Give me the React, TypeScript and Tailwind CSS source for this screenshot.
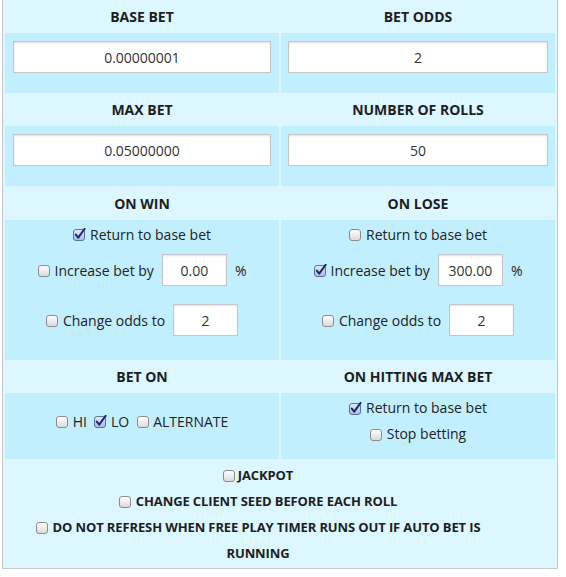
import React from 'react';

const Box = ({ checked = false, className = '' }: { checked?: boolean; className?: string }) => (
  <svg width="13" height="13" viewBox="0 0 13 13" className={`inline-block shrink-0 ${className}`}>
    <defs>
      <linearGradient id="cbOff" x1="0" y1="0" x2="0" y2="1">
        <stop offset="0" stopColor="#ffffff" />
        <stop offset="1" stopColor="#d9d9d9" />
      </linearGradient>
      <linearGradient id="cbOn" x1="0" y1="0" x2="0" y2="1">
        <stop offset="0" stopColor="#e4ebfa" />
        <stop offset="1" stopColor="#a9b9e3" />
      </linearGradient>
    </defs>
    <rect
      x="0.5"
      y="1.5"
      width="11"
      height="11"
      rx="2.5"
      fill={checked ? 'url(#cbOn)' : 'url(#cbOff)'}
      stroke={checked ? '#5f6f9c' : '#8c8c8c'}
    />
    {checked && (
      <path d="M2.8 6.6 L5.2 9.6 L11.6 0.8" stroke="#1c2a6b" strokeWidth="2" fill="none" strokeLinecap="round" strokeLinejoin="round" />
    )}
  </svg>
);

const Field = ({ value, className = '' }: { value: string; className?: string }) => (
  <div
    className={`h-[32px] bg-white border border-[#c6c6c6] shadow-[inset_0_1px_2px_rgba(0,0,0,0.12)] flex items-center justify-center text-[14px] text-[#333] ${className}`}
  >
    {value}
  </div>
);

const Head = ({ label, h = 'h-[33px]' }: { label: string; h?: string }) => (
  <div className={`${h} flex items-center justify-center font-bold text-[14px] text-[#1e1e1e]`}>{label}</div>
);

const Option = ({ checked = false, label }: { checked?: boolean; label: string }) => (
  <div className="flex items-center justify-center gap-[4px] h-[20px]">
    <Box checked={checked} />
    <span>{label}</span>
  </div>
);

const Adjust = ({ checked = false, label, value, pct = false }: { checked?: boolean; label: string; value: string; pct?: boolean }) => (
  <div className="flex items-center justify-center h-[32px]">
    <Box checked={checked} />
    <span className="ml-[4px]">{label}</span>
    <Field value={value} className="w-[65px] ml-[8px]" />
    {pct && <span className="ml-[8px]">%</span>}
  </div>
);

export default function App() {
  return (
    <div className="w-[566px] h-[577px] bg-white font-['Open_Sans',sans-serif] text-[14px] text-[#222]">
      <div className="ml-[2px] w-[556px] border-x border-b border-[#c9c9c9] bg-[#dcf7ff] px-[2px]">
        <div className="grid grid-cols-2 gap-x-[2px]">
          {/* Base bet / odds */}
          <Head label="BASE BET" />
          <Head label="BET ODDS" />
          <div className="h-[60px] bg-[#c2effe] pt-[8px] px-[8px]">
            <Field value="0.00000001" />
          </div>
          <div className="h-[60px] bg-[#c2effe] pt-[8px] px-[7px]">
            <Field value="2" />
          </div>

          {/* Max bet / rolls */}
          <Head label="MAX BET" />
          <Head label="NUMBER OF ROLLS" />
          <div className="h-[60px] bg-[#c2effe] pt-[8px] px-[8px]">
            <Field value="0.05000000" />
          </div>
          <div className="h-[60px] bg-[#c2effe] pt-[8px] px-[7px]">
            <Field value="50" />
          </div>

          {/* On win / on lose */}
          <Head label="ON WIN" h="h-[34px]" />
          <Head label="ON LOSE" h="h-[34px]" />
          <div className="h-[140px] bg-[#c2effe] pt-[4px]">
            <Option checked label="Return to base bet" />
            <div className="mt-[10px]">
              <Adjust label="Increase bet by" value="0.00" pct />
            </div>
            <div className="mt-[18px]">
              <Adjust label="Change odds to" value="2" />
            </div>
          </div>
          <div className="h-[140px] bg-[#c2effe] pt-[4px]">
            <Option label="Return to base bet" />
            <div className="mt-[10px]">
              <Adjust checked label="Increase bet by" value="300.00" pct />
            </div>
            <div className="mt-[18px]">
              <Adjust label="Change odds to" value="2" />
            </div>
          </div>

          {/* Bet on / max bet hit */}
          <Head label="BET ON" />
          <Head label="ON HITTING MAX BET" />
          <div className="h-[66px] bg-[#c2effe] pt-[15px]">
            <div className="flex items-center justify-center h-[26px]">
              <Box />
              <span className="ml-[4px]">HI</span>
              <Box checked className="ml-[7px]" />
              <span className="ml-[4px]">LO</span>
              <Box className="ml-[8px]" />
              <span className="ml-[3px]">ALTERNATE</span>
            </div>
          </div>
          <div className="h-[66px] bg-[#c2effe] pt-[2px] leading-[26px]">
            <div className="flex items-center justify-center gap-[4px] h-[26px]">
              <Box checked />
              <span>Return to base bet</span>
            </div>
            <div className="flex items-center justify-center gap-[4px] h-[26px]">
              <Box />
              <span>Stop betting</span>
            </div>
          </div>
        </div>

        {/* Extra options */}
        <div className="h-[109px] pt-[3px] pr-[44px] text-center font-bold text-[13px] tracking-[-0.12px] leading-[26px] text-[#1e1e1e]">
          <div>
            <Box className="align-[-2px] mr-[2px]" />
            JACKPOT
          </div>
          <div>
            <Box className="align-[-2px] mr-[4px]" />
            CHANGE CLIENT SEED BEFORE EACH ROLL
          </div>
          <div>
            <Box className="align-[-2px] mr-[4px]" />
            DO NOT REFRESH WHEN FREE PLAY TIMER RUNS OUT IF AUTO BET IS
            <br />
            RUNNING
          </div>
        </div>
      </div>
    </div>
  );
}
